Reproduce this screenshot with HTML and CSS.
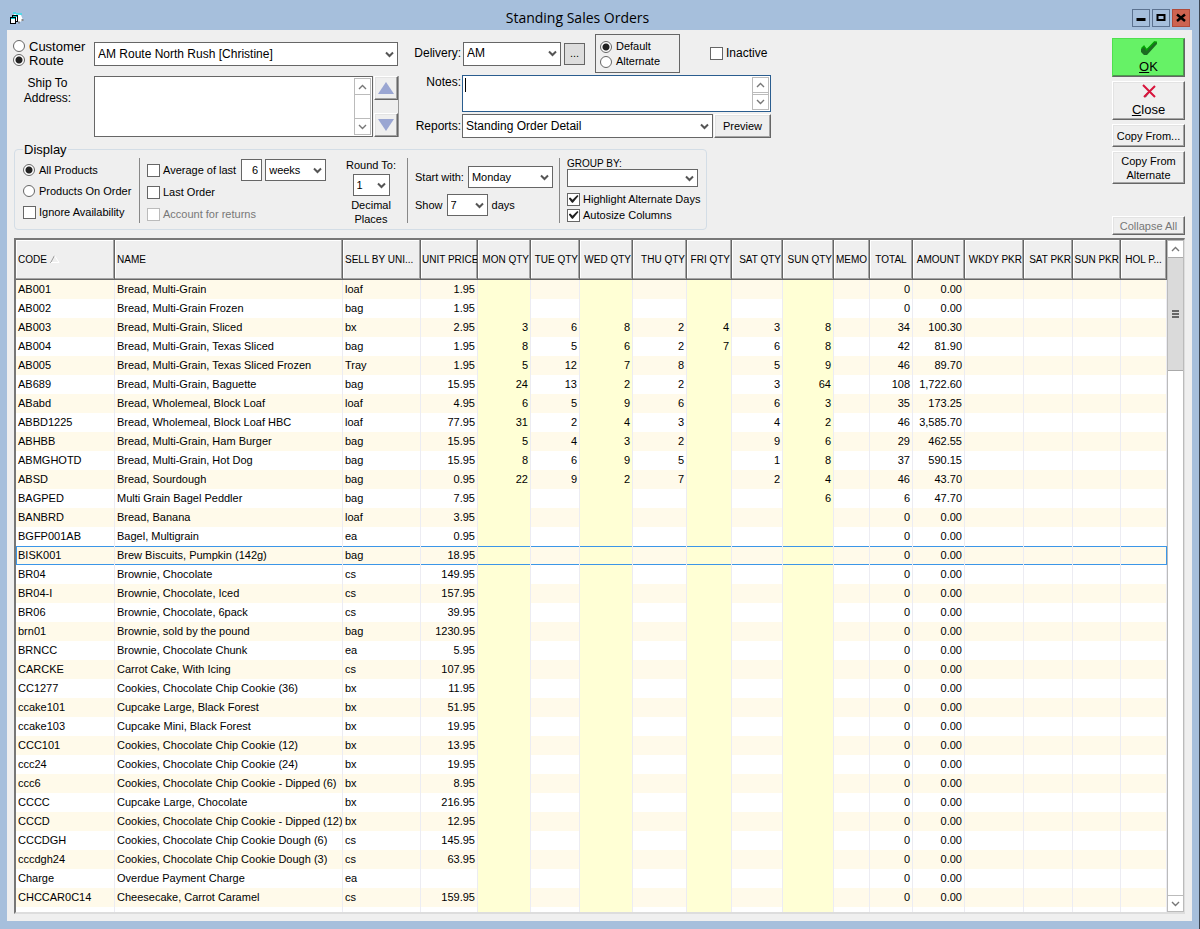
FILE: index.html
```html
<!DOCTYPE html>
<html lang="en">
<head>
    <meta charset="UTF-8">
    <meta name="viewport" content="width=device-width, initial-scale=1.0">
    <title>Standing Sales Orders</title>
    <link rel="stylesheet" href="styles.css">
    <script src="orders.js" defer></script>
</head>
<body>
    <svg class="symbols" aria-hidden="true">
        <symbol id="chevron" viewBox="0 0 9 7"><path d="M1 1.5 L4.5 5 L8 1.5" fill="none" stroke="#555" stroke-width="2"/></symbol>
        <symbol id="arrow-up" viewBox="0 0 9 6"><path d="M1 5 L4.5 1.5 L8 5" fill="none" stroke="#777" stroke-width="1.4"/></symbol>
        <symbol id="arrow-down" viewBox="0 0 9 6"><path d="M1 1 L4.5 4.5 L8 1" fill="none" stroke="#777" stroke-width="1.4"/></symbol>
    </svg>

    <header class="titlebar">
        <svg class="app-icon" width="16" height="13" viewBox="0 0 16 13">
            <path d="M5 2 L12 3 L14 8 L11 10 L7 9 Z" fill="#fff"/>
            <path d="M4 1 H7 M7 2 H13" stroke="#0ee" stroke-width="1"/>
            <path d="M9 10.500 H11 M13.500 7 V9" stroke="#888" stroke-width="2"/>
            <rect x="3.500" y="3.500" width="5" height="6" fill="#fff" stroke="#000"/>
            <rect x="1.500" y="5.500" width="5" height="6" fill="#fff" stroke="#000"/>
            <path d="M2 6.500 H6 M4 4.500 H8" stroke="#0cc"/>
        </svg>
        <h1>Standing Sales Orders</h1>
        <div class="window-buttons">
            <button type="button" aria-label="Minimize"><svg width="10" height="10" viewBox="0 0 10 10"><path d="M0.500 6.500 H9.500" stroke="#000" stroke-width="3"/></svg></button>
            <button type="button" aria-label="Maximize"><svg width="10" height="10" viewBox="0 0 10 10"><rect x="1.500" y="2" width="7" height="5" fill="none" stroke="#000" stroke-width="2"/></svg></button>
            <button type="button" class="close-window" aria-label="Close window"><svg width="10" height="10" viewBox="0 0 10 10"><path d="M1 1.500 L9 8 M9 1.500 L1 8" stroke="#000" stroke-width="2.400"/></svg></button>
        </div>
    </header>

    <main class="window">
        <div class="top">
            <form class="options">
                <div class="order">
                    <div class="route">
                        <div class="line route-line">
                            <div class="who">
                                <label><input type="radio" name="who"> Customer</label>
                                <label><input type="radio" name="who" checked> Route</label>
                            </div>
                            <span class="dropdown grow"><select aria-label="Route"><option>AM Route North Rush [Christine]</option></select><svg><use href="#chevron"/></svg></span>
                        </div>
                        <div class="line">
                            <label class="ship-label" for="shipTo">Ship To<br>Address:</label>
                            <div class="memo ship">
                                <textarea id="shipTo"></textarea>
                                <div class="scroll">
                                    <button type="button" aria-label="Scroll up"><svg><use href="#arrow-up"/></svg></button>
                                    <button type="button" aria-label="Scroll down"><svg><use href="#arrow-down"/></svg></button>
                                </div>
                            </div>
                            <div class="spin">
                                <button type="button" class="raised" aria-label="Previous"><svg width="18" height="12" viewBox="0 0 18 12"><path d="M9 0 L17 12 H1 Z" fill="#9aa6d2"/></svg></button>
                                <button type="button" class="raised" aria-label="Next"><svg width="18" height="12" viewBox="0 0 18 12"><path d="M1 0 H17 L9 12 Z" fill="#9aa6d2"/></svg></button>
                            </div>
                        </div>
                    </div>

                    <div class="details">
                        <div class="line delivery-line">
                            <label class="side-label" for="delivery">Delivery:</label>
                            <span class="dropdown delivery"><select id="delivery"><option>AM</option></select><svg><use href="#chevron"/></svg></span>
                            <button type="button" class="more">...</button>
                            <div class="address-kind">
                                <label><input type="radio" name="kind" checked> Default</label>
                                <label><input type="radio" name="kind"> Alternate</label>
                            </div>
                            <label class="inactive"><input type="checkbox"> Inactive</label>
                        </div>
                        <div class="line notes-line">
                            <label class="side-label" for="notes">Notes:</label>
                            <div class="memo notes">
                                <textarea id="notes" autofocus></textarea>
                                <div class="scroll">
                                    <button type="button" aria-label="Scroll up"><svg><use href="#arrow-up"/></svg></button>
                                    <button type="button" aria-label="Scroll down"><svg><use href="#arrow-down"/></svg></button>
                                </div>
                            </div>
                        </div>
                        <div class="line">
                            <label class="side-label" for="reports">Reports:</label>
                            <span class="dropdown grow"><select id="reports"><option>Standing Order Detail</option></select><svg><use href="#chevron"/></svg></span>
                            <button type="button" class="raised preview">Preview</button>
                        </div>
                    </div>
                </div>

                <fieldset class="display">
                    <legend>Display</legend>
                    <div class="group products">
                        <label><input type="radio" name="show" checked> All Products</label>
                        <label><input type="radio" name="show"> Products On Order</label>
                        <label><input type="checkbox"> Ignore Availability</label>
                    </div>
                    <div class="group average">
                        <div class="line average-line">
                            <label><input type="checkbox"> Average of last</label>
                            <input type="text" class="count" value="6" aria-label="Number of periods">
                            <span class="dropdown weeks"><select aria-label="Period"><option>weeks</option></select><svg><use href="#chevron"/></svg></span>
                        </div>
                        <label><input type="checkbox"> Last Order</label>
                        <label class="off"><input type="checkbox" disabled> Account for returns</label>
                    </div>
                    <div class="group round">
                        <label for="round">Round To:</label>
                        <span class="dropdown places"><select id="round"><option>1</option></select><svg><use href="#chevron"/></svg></span>
                        <span>Decimal<br>Places</span>
                    </div>
                    <div class="group days">
                        <div class="line">
                            <label for="startWith">Start with:</label>
                            <span class="dropdown start"><select id="startWith"><option>Monday</option></select><svg><use href="#chevron"/></svg></span>
                        </div>
                        <div class="line">
                            <label for="dayCount">Show</label>
                            <span class="dropdown day-count"><select id="dayCount"><option>7</option></select><svg><use href="#chevron"/></svg></span>
                            <span>days</span>
                        </div>
                    </div>
                    <div class="group grouping">
                        <label for="groupBy">GROUP BY:</label>
                        <span class="dropdown"><select id="groupBy"><option></option></select><svg><use href="#chevron"/></svg></span>
                        <label><input type="checkbox" checked> Highlight Alternate Days</label>
                        <label><input type="checkbox" checked> Autosize Columns</label>
                    </div>
                </fieldset>
            </form>

            <div class="actions">
                <button type="button" class="raised big ok">
                    <svg width="18" height="15" viewBox="0 0 18 15"><path d="M1 8 L4 5 L7 8 L14 0.500 L17 1 V3 L7 14 H4 L1 11 Z" fill="#1c6b22"/><path d="M1.500 7.500 L4 5 L6.500 9 L14.500 0.800 L17 1" fill="none" stroke="#0a0" stroke-width="1.200"/></svg>
                    <span><u>O</u>K</span>
                </button>
                <button type="button" class="raised big">
                    <svg width="14" height="14" viewBox="0 0 14 14"><path d="M3 13 L6 9" stroke="#777" stroke-width="2"/><path d="M1 1 L13 13 M13 2 L2 13" stroke="#d8143c" stroke-width="2"/></svg>
                    <span><u>C</u>lose</span>
                </button>
                <button type="button" class="raised">Copy From...</button>
                <button type="button" class="raised two-line">Copy From<br>Alternate</button>
                <button type="button" class="raised collapse" disabled>Collapse All</button>
            </div>
        </div>

        <div class="grid">
            <div class="grid-view">
                <table>
                    <colgroup>
                        <col class="c-code"><col><col class="c-unit"><col class="c-price">
                        <col class="c-mon"><col class="c-tue"><col class="c-wed"><col class="c-thu"><col class="c-fri"><col class="c-sat"><col class="c-sun">
                        <col class="c-memo"><col class="c-total"><col class="c-amount">
                        <col class="c-wkdy"><col class="c-satp"><col class="c-sunp"><col class="c-hol">
                    </colgroup>
                    <thead>
                        <tr>
                            <th>CODE <svg width="10" height="8" viewBox="0 0 10 8"><path d="M0.500 8 L4.500 0.500" stroke="#999"/><path d="M4.500 0.500 L9 7.500 H1" fill="none" stroke="#fff"/></svg></th>
                            <th>NAME</th>
                            <th>SELL BY UNI...</th>
                            <th class="num">UNIT PRICE</th>
                            <th class="num">MON QTY</th>
                            <th class="num">TUE QTY</th>
                            <th class="num">WED QTY</th>
                            <th class="num">THU QTY</th>
                            <th class="num">FRI QTY</th>
                            <th class="num">SAT QTY</th>
                            <th class="num">SUN QTY</th>
                            <th class="mid">MEMO</th>
                            <th class="mid">TOTAL</th>
                            <th class="mid">AMOUNT</th>
                            <th class="num">WKDY PKR</th>
                            <th class="num">SAT PKR</th>
                            <th class="num">SUN PKR</th>
                            <th class="mid">HOL P...</th>
                        </tr>
                    </thead>
                    <tbody id="rows"></tbody>
                </table>
            </div>
            <div class="grid-scroll">
                <button type="button" aria-label="Scroll up"><svg><use href="#arrow-up"/></svg></button>
                <div class="thumb"><svg width="7" height="8" viewBox="0 0 7 8"><path d="M0 1 H7 M0 4 H7 M0 7 H7" stroke="#666" stroke-width="2"/></svg></div>
                <button type="button" class="down" aria-label="Scroll down"><svg><use href="#arrow-down"/></svg></button>
            </div>
        </div>
    </main>
</body>
</html>
```
FILE: styles.css
```css
* {
    box-sizing: border-box;
}
body {
    margin: 0;
    height: 100vh;
    padding: 0 7px 8px;
    display: flex;
    flex-direction: column;
    background: #a6bfdc;
    border-right: 1px solid #3c4654;
    font-family: "Liberation Sans", Arial, sans-serif;
    font-size: 11px;
    line-height: 14px;
    color: #000;
    overflow: hidden;
}
button, input, select, textarea {
    font: inherit;
    color: inherit;
    margin: 0;
    padding: 0;
    border-radius: 0;
}
label {
    display: flex;
    align-items: center;
    white-space: nowrap;
}
.symbols {
    display: none;
}

/* title bar */
.titlebar {
    display: grid;
    grid-template-columns: 16px 1fr 60px;
    align-items: center;
    height: 30px;
    padding: 6px 2px 0;
    flex: none;
}
.titlebar h1 {
    margin: 0;
    font: 14px/20px "Open Sans", "Noto Sans", sans-serif;
    text-align: center;
}
.window-buttons {
    display: flex;
    justify-content: flex-end;
    gap: 2px;
}
.window-buttons button {
    width: 18px;
    height: 18px;
    display: grid;
    place-items: center;
    background: none;
    border: 1px solid #5c7290;
}
.window-buttons .close-window {
    background: #cd6350;
    border-color: #b04a3a;
}

.window {
    flex: 1;
    min-height: 0;
    display: flex;
    flex-direction: column;
    padding: 4px 7px 7px;
    background: #efefef;
}
.top {
    display: flex;
    justify-content: space-between;
    margin-bottom: 3px;
}
.line {
    display: flex;
}
.grow {
    flex: 1;
}

/* radios and tick boxes */
input[type="radio"], input[type="checkbox"] {
    appearance: none;
    flex: none;
    width: 13px;
    height: 13px;
    margin-right: 3px;
    background: #fff;
    border: 1px solid #666;
}
input[type="radio"] {
    width: 12px;
    height: 12px;
    margin-right: 4px;
    border-radius: 50%;
}
input[type="radio"]:checked {
    background: radial-gradient(circle, #222 0 3px, #fff 4px);
}
input[type="checkbox"] {
    display: grid;
    place-items: center;
}
input[type="checkbox"]:checked::before {
    content: "";
    width: 10px;
    height: 8px;
    background: #222;
    clip-path: polygon(0 40%, 18% 30%, 40% 60%, 88% 0, 100% 12%, 42% 100%, 30% 90%);
}
input[type="checkbox"]:disabled {
    border-color: #bbb;
}

/* drop-downs */
.dropdown {
    display: grid;
    height: 22px;
}
.dropdown select, .dropdown svg {
    grid-area: 1 / 1;
}
.dropdown select {
    appearance: none;
    width: 100%;
    min-width: 0;
    padding: 0 14px 0 3px;
    background: #fff;
    border: 1px solid #666;
}
.dropdown svg {
    width: 9px;
    height: 7px;
    margin-right: 4px;
    align-self: center;
    justify-self: end;
    pointer-events: none;
}

.raised {
    background: #efefef;
    border: 1px solid;
    border-color: #fff #666 #666 #fff;
    box-shadow: inset -1px -1px #a5a5a5, inset 1px 1px #e3e3e3;
}

/* route and delivery */
.order {
    display: flex;
    gap: 14px;
    font-size: 12px;
    line-height: 15px;
}
.order .dropdown {
    height: 24px;
}
.route {
    width: 386px;
    margin-left: -1px;
}
.route-line {
    padding: 5px 1px 0 0;
    margin-bottom: 9px;
}
.route-line .dropdown {
    margin-top: 3px;
}
.who {
    width: 81px;
    font-size: 13px;
}
.who label {
    height: 14px;
}
.ship-label {
    width: 69px;
    margin-right: 12px;
    justify-content: center;
    align-items: flex-start;
    text-align: center;
}
.memo {
    display: flex;
    flex: 1;
    padding: 1px;
    background: #fff;
    border: 1px solid #666;
}
.memo textarea {
    flex: 1;
    min-width: 0;
    padding: 1px 2px;
    border: 0;
    outline: 0;
    resize: none;
}
.scroll {
    display: flex;
    flex-direction: column;
    justify-content: space-between;
    width: 17px;
    border: 1px solid #bbb;
}
.scroll button {
    height: 16px;
    display: grid;
    place-items: center;
    background: #fff;
    border: 0;
    border-bottom: 1px solid #bbb;
}
.scroll button:last-child {
    border-top: 1px solid #bbb;
    border-bottom: 0;
}
.scroll svg, .grid-scroll button svg {
    width: 9px;
    height: 6px;
}
.ship {
    height: 61px;
}
.spin {
    display: flex;
    flex-direction: column;
    justify-content: space-between;
    width: 25px;
    margin-left: 1px;
    border-right: 1px solid #999;
}
.spin button {
    height: 24px;
    display: grid;
    place-items: center;
}
.details {
    width: 358px;
}
.side-label {
    width: 49px;
    padding-right: 1px;
    justify-content: flex-end;
}
.delivery-line {
    align-items: center;
    margin-bottom: 2px;
}
.delivery {
    width: 98px;
    margin-left: 1px;
}
.more {
    width: 21px;
    height: 22px;
    margin-left: 3px;
    background: #ddd;
    border: 1px solid #666;
    font-size: 11px;
}
.address-kind {
    width: 85px;
    height: 39px;
    margin: 0 30px 0 10px;
    padding: 4px;
    border: 1px solid #666;
    font-size: 11px;
}
.address-kind label {
    height: 15px;
}
.notes-line {
    height: 37px;
    margin-bottom: 2px;
}
.notes-line .side-label {
    align-items: flex-start;
}
.notes {
    border-color: #2a5d8f;
}
.notes textarea:focus {
    caret-color: transparent;
    background: linear-gradient(#000, #000) 1px 1px / 1px 14px no-repeat;
}
.notes .scroll button {
    height: 15px;
}
.preview {
    width: 57px;
    margin-left: 1px;
    font-size: 11px;
}

/* display options */
.display {
    display: flex;
    width: 692px;
    height: 88px;
    margin: 4px 0 5px;
    padding: 0 8px;
    border: 1px solid #d3dde6;
    border-radius: 4px;
}
.display legend {
    height: 15px;
    padding: 0 1px;
    font-size: 13px;
    line-height: 15px;
}
.group {
    display: flex;
    flex-direction: column;
    height: 65px;
    margin-top: 1px;
    padding-left: 7px;
    border-left: 1px solid #888;
}
.products {
    width: 116px;
    padding: 5px 0 0;
    border: 0;
    gap: 7px;
}
.average {
    width: 196px;
    padding-top: 1px;
    gap: 8px;
}
.average-line {
    gap: 3px;
    margin-bottom: -4px;
}
.count {
    width: 21px;
    height: 22px;
    margin-left: 2px;
    padding-right: 3px;
    text-align: right;
    border: 1px solid #666;
}
.weeks {
    width: 61px;
}
.off {
    color: #777;
}
.round {
    width: 72px;
    padding: 0;
    border: 0;
    align-items: center;
    text-align: center;
}
.places {
    width: 37px;
    flex: none;
    margin: 2px 0;
}
.days {
    width: 152px;
    padding-top: 8px;
    gap: 6px;
}
.days .line {
    gap: 4px;
    align-items: center;
}
.start {
    width: 85px;
}
.day-count {
    width: 41px;
}
.grouping {
    width: 139px;
}
.grouping label {
    height: 16px;
    flex: none;
}
.grouping label:first-child {
    height: 11px;
    font-size: 10px;
}
.grouping .dropdown {
    margin-bottom: 4px;
}

/* buttons on the right */
.actions {
    display: flex;
    flex-direction: column;
    gap: 4px;
    width: 73px;
    padding-top: 4px;
}
.actions button {
    height: 23px;
    flex: none;
}
.actions .big {
    height: 39px;
    display: flex;
    flex-direction: column;
    align-items: center;
    justify-content: space-between;
    padding: 2px 0;
    font-size: 13px;
    line-height: 15px;
}
.actions .ok {
    background: #66f266;
    border-color: #4fe04f #666 #666 #4fe04f;
    box-shadow: inset -1px -1px #4b9b4b;
}
.actions .two-line {
    height: 33px;
}
.actions .collapse {
    height: 19px;
    margin-top: auto;
    color: #777;
}

/* orders grid */
.grid {
    flex: 1;
    min-height: 0;
    display: flex;
    background: #fff;
    border: solid;
    border-width: 2px 1px 2px 2px;
    border-color: #777 #ddd #ddd #777;
}
.grid-view {
    flex: 1;
    overflow: hidden;
}
table {
    width: 100%;
    table-layout: fixed;
    border-collapse: separate;
    border-spacing: 0;
}
th, td {
    padding: 0 2px;
    overflow: hidden;
    white-space: nowrap;
    text-align: left;
    font-weight: normal;
}
th {
    height: 40px;
    background: #efefef;
    border-right: 1px solid #666;
    border-bottom: 1px solid #666;
    box-shadow: inset -1px -1px #a5a5a5, inset 1px 1px #fff;
    font-size: 10px;
}
td {
    height: 19px;
    padding-bottom: 2px;
    border-right: 1px solid #ececf2;
}
tbody tr:nth-child(odd) {
    background: #fffaea;
}
tbody .hot {
    background: #ffffd5;
}
.num {
    text-align: right;
}
th.num {
    padding: 0 1px;
}
th.mid {
    text-align: center;
    padding: 0;
}
.selected td {
    box-shadow: inset 0 1px #3b96e8, inset 0 -1px #3b96e8;
}
.selected td:first-child {
    box-shadow: inset 1px 1px #3b96e8, inset 0 -1px #3b96e8;
}
.selected td:last-child {
    border-right-color: #3b96e8;
}
.c-code { width: 99px; }
.c-unit { width: 78px; }
.c-price { width: 57px; }
.c-mon, .c-wed { width: 53px; }
.c-tue, .c-satp { width: 49px; }
.c-thu { width: 54px; }
.c-fri { width: 45px; }
.c-sat, .c-sun { width: 51px; }
.c-memo { width: 36px; }
.c-total { width: 43px; }
.c-amount { width: 52px; }
.c-wkdy { width: 59px; }
.c-sunp { width: 48px; }
.c-hol { width: 46px; }

.grid-scroll {
    display: flex;
    flex-direction: column;
    width: 17px;
    border: 1px solid #bbb;
}
.grid-scroll button {
    height: 16px;
    display: grid;
    place-items: center;
    background: #fff;
    border: 0;
}
.grid-scroll .down {
    margin-top: auto;
    border-top: 1px solid #bbb;
}
.thumb {
    height: 114px;
    display: grid;
    place-items: center;
    background: #dadada;
    border: solid #aaa;
    border-width: 1px 0;
}
```
FILE: orders.js
```js
// code, name, unit, price, quantities Mon-Sun, total, amount
const orders = [
    ['AB001', 'Bread, Multi-Grain', 'loaf', '1.95'],
    ['AB002', 'Bread, Multi-Grain Frozen', 'bag', '1.95'],
    ['AB003', 'Bread, Multi-Grain, Sliced', 'bx', '2.95', [3, 6, 8, 2, 4, 3, 8], '34', '100.30'],
    ['AB004', 'Bread, Multi-Grain, Texas Sliced', 'bag', '1.95', [8, 5, 6, 2, 7, 6, 8], '42', '81.90'],
    ['AB005', 'Bread, Multi-Grain, Texas Sliced Frozen', 'Tray', '1.95', [5, 12, 7, 8, '', 5, 9], '46', '89.70'],
    ['AB689', 'Bread, Multi-Grain, Baguette', 'bag', '15.95', [24, 13, 2, 2, '', 3, 64], '108', '1,722.60'],
    ['ABabd', 'Bread, Wholemeal, Block Loaf', 'loaf', '4.95', [6, 5, 9, 6, '', 6, 3], '35', '173.25'],
    ['ABBD1225', 'Bread, Wholemeal, Block Loaf HBC', 'loaf', '77.95', [31, 2, 4, 3, '', 4, 2], '46', '3,585.70'],
    ['ABHBB', 'Bread, Multi-Grain, Ham Burger', 'bag', '15.95', [5, 4, 3, 2, '', 9, 6], '29', '462.55'],
    ['ABMGHOTD', 'Bread, Multi-Grain, Hot Dog', 'bag', '15.95', [8, 6, 9, 5, '', 1, 8], '37', '590.15'],
    ['ABSD', 'Bread, Sourdough', 'bag', '0.95', [22, 9, 2, 7, '', 2, 4], '46', '43.70'],
    ['BAGPED', 'Multi Grain Bagel Peddler', 'bag', '7.95', ['', '', '', '', '', '', 6], '6', '47.70'],
    ['BANBRD', 'Bread, Banana', 'loaf', '3.95'],
    ['BGFP001AB', 'Bagel, Multigrain', 'ea', '0.95'],
    ['BISK001', 'Brew Biscuits, Pumpkin (142g)', 'bag', '18.95'],
    ['BR04', 'Brownie, Chocolate', 'cs', '149.95'],
    ['BR04-I', 'Brownie, Chocolate, Iced', 'cs', '157.95'],
    ['BR06', 'Brownie, Chocolate, 6pack', 'cs', '39.95'],
    ['brn01', 'Brownie, sold by the pound', 'bag', '1230.95'],
    ['BRNCC', 'Brownie, Chocolate Chunk', 'ea', '5.95'],
    ['CARCKE', 'Carrot Cake, With Icing', 'cs', '107.95'],
    ['CC1277', 'Cookies, Chocolate Chip Cookie (36)', 'bx', '11.95'],
    ['ccake101', 'Cupcake Large, Black Forest', 'bx', '51.95'],
    ['ccake103', 'Cupcake Mini, Black Forest', 'bx', '19.95'],
    ['CCC101', 'Cookies, Chocolate Chip Cookie (12)', 'bx', '13.95'],
    ['ccc24', 'Cookies, Chocolate Chip Cookie (24)', 'bx', '19.95'],
    ['ccc6', 'Cookies, Chocolate Chip Cookie - Dipped (6)', 'bx', '8.95'],
    ['CCCC', 'Cupcake Large, Chocolate', 'bx', '216.95'],
    ['CCCD', 'Cookies, Chocolate Chip Cookie - Dipped (12)', 'bx', '12.95'],
    ['CCCDGH', 'Cookies, Chocolate Chip Cookie Dough (6)', 'cs', '145.95'],
    ['cccdgh24', 'Cookies, Chocolate Chip Cookie Dough (3)', 'cs', '63.95'],
    ['Charge', 'Overdue Payment Charge', 'ea', ''],
    ['CHCCAR0C14', 'Cheesecake, Carrot Caramel', 'cs', '159.95'],
    ['CHBBLKCWLC', 'Cheesecake, Blueberry Cookie 8"', 'cs', '108.95']
];

const selectedCode = 'BISK001';
const body = document.getElementById('rows');

orders.forEach(([code, name, unit, price, days = Array(7).fill(''), total = '0', amount = '0.00']) => {
    const row = body.insertRow();
    if (code === selectedCode) {
        row.className = 'selected';
    }
    const values = [code, name, unit, price, ...days, '', total, amount, '', '', '', ''];
    values.forEach((value, i) => {
        const cell = row.insertCell();
        cell.textContent = value;
        if (i > 2) {
            cell.classList.add('num');
        }
        // Mon, Wed, Fri and Sun are the highlighted days
        if (i >= 4 && i <= 10 && i % 2 === 0) {
            cell.classList.add('hot');
        }
    });
});

document.getElementById('notes').focus();
```
